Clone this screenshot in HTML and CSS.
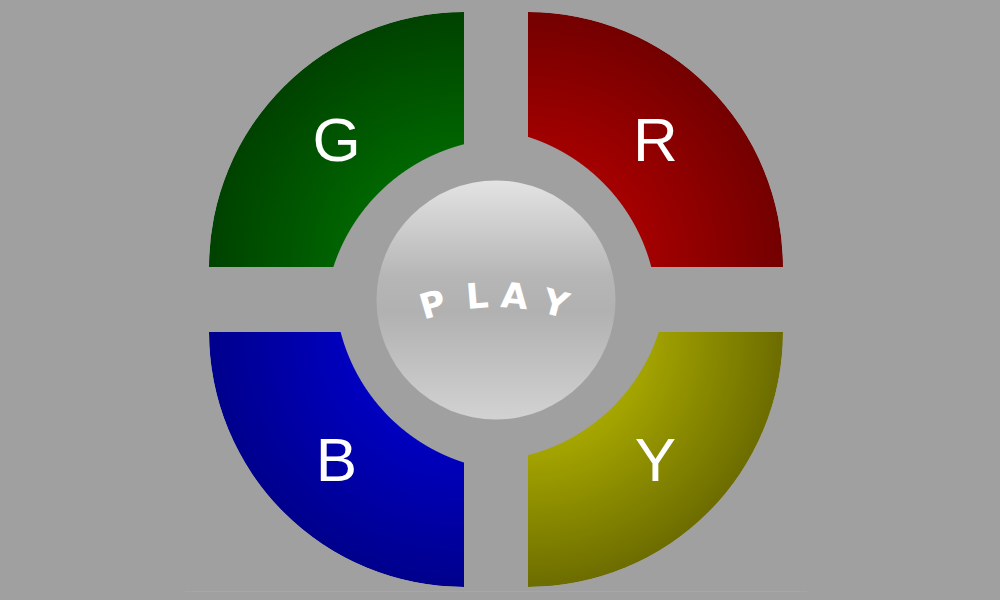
FILE: index.html
```html
<!DOCTYPE html>
<html lang="en">
<head>
<meta charset="utf-8">
<title>Simon</title>
<link rel="stylesheet" href="styles.css">
</head>
<body>
<main class="stage">
  <div class="board">
    <div class="pad pad-green">G</div>
    <div class="pad pad-red">R</div>
    <div class="pad pad-blue">B</div>
    <div class="pad pad-yellow">Y</div>
    <div class="play">
      <span class="ch ch-p">P</span>
      <span class="ch ch-l">L</span>
      <span class="ch ch-a">A</span>
      <span class="ch ch-y">Y</span>
    </div>
  </div>
  <div class="base"></div>
</main>
</body>
</html>
```
FILE: styles.css
```css
html, body {
  margin: 0;
  padding: 0;
  background: #a0a0a0;
  width: 1000px;
  height: 600px;
  overflow: hidden;
  font-family: "Liberation Sans", Arial, sans-serif;
}

.stage {
  padding: 12px 0 0 209px;
}

.board {
  position: relative;
  width: 574px;
  height: 575px;
  display: grid;
  grid-template-columns: 255px 255px;
  grid-template-rows: 255px 255px;
  column-gap: 64px;
  row-gap: 65px;
}

.pad {
  display: flex;
  align-items: center;
  justify-content: center;
  color: #ffffff;
  font-size: 62px;
  line-height: 1;
}

.pad-green {
  border-top-left-radius: 100%;
  background: radial-gradient(circle at 100% 100%, #007400 60px, #003600 300px);
  -webkit-mask-image: radial-gradient(circle 186px at 301.3px 312.4px, transparent 185.5px, #000 186.5px);
  mask-image: radial-gradient(circle 186px at 301.3px 312.4px, transparent 185.5px, #000 186.5px);
}

.pad-red {
  border-top-right-radius: 100%;
  background: radial-gradient(circle at 0% 100%, #b80000 60px, #640000 300px);
  -webkit-mask-image: radial-gradient(circle 186px at -56.7px 302px, transparent 185.5px, #000 186.5px);
  mask-image: radial-gradient(circle 186px at -56.7px 302px, transparent 185.5px, #000 186.5px);
}

.pad-blue {
  border-bottom-left-radius: 100%;
  background: radial-gradient(circle at 100% 0%, #0000d4 60px, #00007c 300px);
  -webkit-mask-image: radial-gradient(circle 186px at 311.7px -46.6px, transparent 185.5px, #000 186.5px);
  mask-image: radial-gradient(circle 186px at 311.7px -46.6px, transparent 185.5px, #000 186.5px);
}

.pad-yellow {
  border-bottom-right-radius: 100%;
  background: radial-gradient(circle at 0% 0%, #bcbc00 60px, #5a5a00 300px);
  -webkit-mask-image: radial-gradient(circle 186px at -46.3px -57px, transparent 185.5px, #000 186.5px);
  mask-image: radial-gradient(circle 186px at -46.3px -57px, transparent 185.5px, #000 186.5px);
}

.play {
  position: absolute;
  left: 50%;
  top: 50%;
  width: 239px;
  height: 239px;
  transform: translate(-50%, -50%);
  border-radius: 50%;
  background: linear-gradient(to bottom, #e3e3e3 0%, #b6b6b6 40%, #b1b1b1 55%, #d2d2d2 100%);
  display: grid;
  overflow: hidden;
}

.ch {
  grid-area: 1 / 1;
  justify-self: center;
  align-self: start;
  margin-top: 97px;
  height: 36px;
  line-height: 36px;
  font-family: "DejaVu Sans", "Liberation Sans", sans-serif;
  font-size: 35px;
  font-weight: bold;
  color: #ffffff;
  transform-origin: 50% 246px;
}

.ch-p { transform: rotate(-16.2deg); }
.ch-l { transform: rotate(-4.65deg); }
.ch-a { transform: rotate(4.65deg); }
.ch-y { transform: rotate(15.1deg); }

.base {
  width: 622px;
  height: 1px;
  margin: 4px 0 0 -24px;
  background: #a6a6a6;
}
```
